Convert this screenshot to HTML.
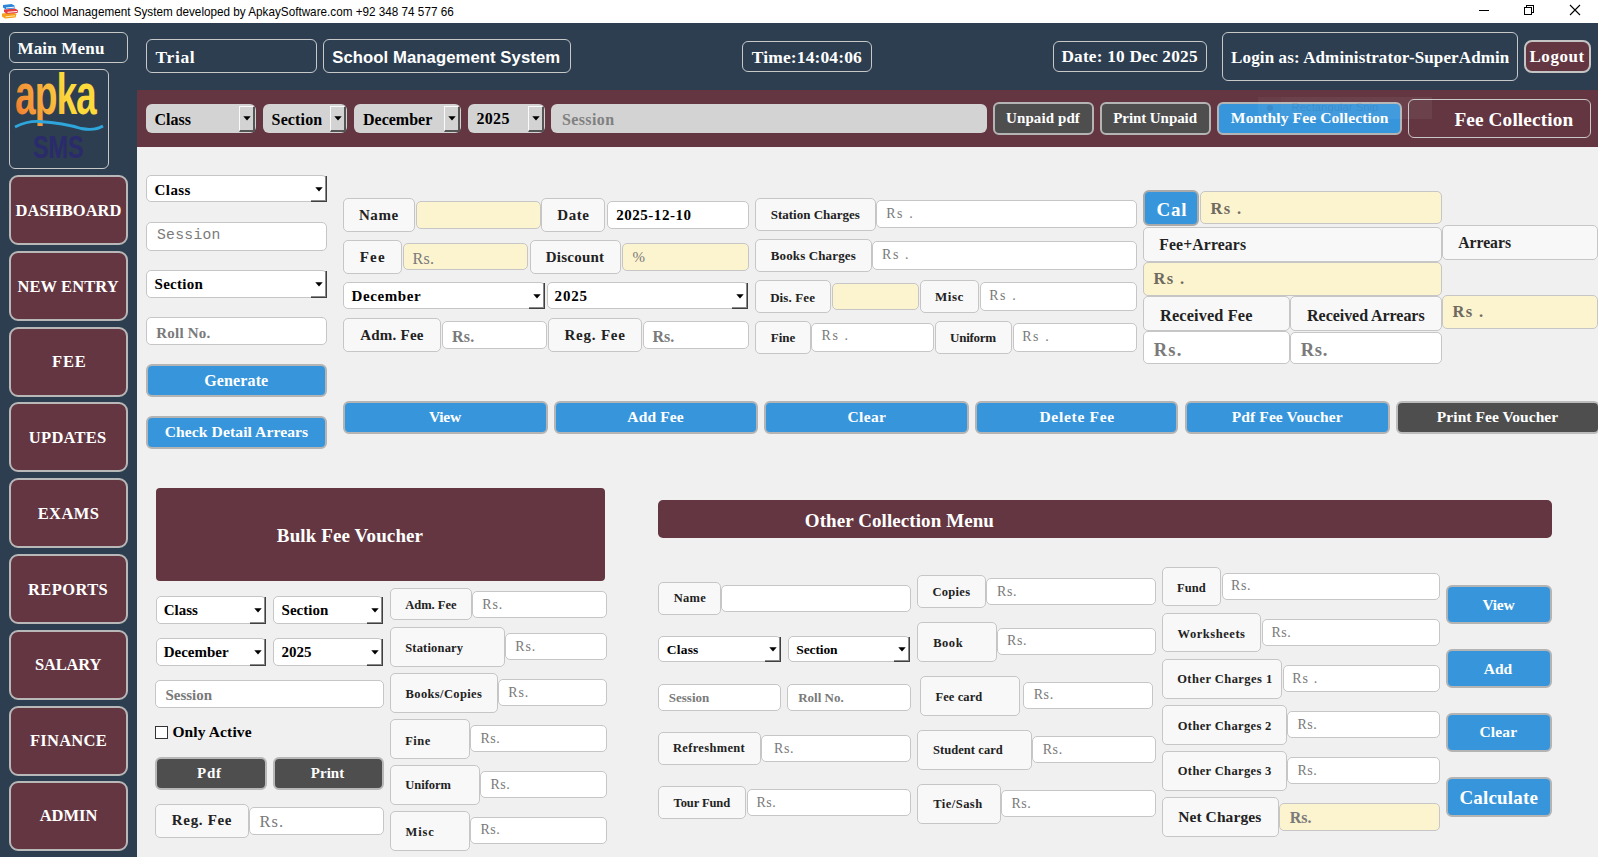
<!DOCTYPE html>
<html><head><meta charset="utf-8"><title>School Management System</title>
<style>
html,body{margin:0;padding:0;}
body{width:1598px;height:857px;overflow:hidden;position:relative;background:#f0f0f0;font-family:"Liberation Serif",serif;}
.b{position:absolute;box-sizing:border-box;}
.t{position:absolute;line-height:1;white-space:pre;}
</style></head><body>
<div class="b" style="left:0;top:0;width:1598px;height:23px;background:#fff"></div>
<div class="b" style="left:0;top:23px;width:1598px;height:834px;background:#2c3e50"></div>
<div class="b" style="left:137px;top:90px;width:1461px;height:57px;background:#633641"></div>
<div class="b" style="left:137px;top:147px;width:1461px;height:710px;background:#f0f0f0"></div>
<svg class="b" style="left:0px;top:0px" width="22" height="22" viewBox="0 0 22 22">
<path d="M2 13.5 L13 12.5 L16.5 14 L15.5 17.5 L5 18.5 L2 16.5 Z" fill="#f5a01c"/><path d="M5.5 16.8 L15 15.8" stroke="#fde7a8" stroke-width="1"/>
<path d="M4 9.5 L15 8.5 L18 10.2 L17.5 13 L6.5 13.8 L4 11.8 Z" fill="#e53a3f"/><path d="M7.5 12.3 L17 11.5" stroke="#fff" stroke-width="1"/>
<path d="M3 5 L11.5 4 L14.5 5.5 L14.5 8.5 L5.5 9.3 L3 7.5 Z" fill="#2a86d8"/><path d="M6 8 L14 7.2" stroke="#fff" stroke-width="1"/>
</svg>
<span class="t" style="left:23.00px;top:6.13px;font-size:12.6px;font-family:'Liberation Sans',sans-serif;font-weight:normal;color:#000;transform:scaleX(0.93);transform-origin:0 0;">School Management System developed by ApkaySoftware.com +92 348 74 577 66</span>
<div class="b" style="left:1479px;top:10px;width:10px;height:1px;background:#000"></div>
<div class="b" style="left:1526px;top:5px;width:8px;height:8px;border:1px solid #000;box-sizing:border-box"></div>
<div class="b" style="left:1524px;top:7px;width:8px;height:8px;border:1px solid #000;background:#fff;box-sizing:border-box"></div>
<svg class="b" style="left:1569px;top:4px" width="12" height="12" viewBox="0 0 12 12"><path d="M1 1 L11 11 M11 1 L1 11" stroke="#000" stroke-width="1.1"/></svg>
<div class="b" style="left:9px;top:32px;width:119px;height:31px;border:1.5px solid #c8c8c8;border-radius:6px;"></div>
<span class="t" style="left:17.40px;top:39.56px;font-size:17px;font-family:'Liberation Serif',serif;font-weight:bold;color:#fff;letter-spacing:0.200px;">Main Menu</span>
<div class="b" style="left:9px;top:69px;width:100px;height:100px;border:1.5px solid #c8c8c8;border-radius:6px;"></div>
<svg class="b" style="left:9px;top:69px" width="100" height="100" viewBox="0 0 100 100">
<defs><linearGradient id="og" gradientUnits="userSpaceOnUse" x1="6" y1="50" x2="90" y2="6"><stop offset="0" stop-color="#e9411f"/><stop offset="0.3" stop-color="#f28a35"/><stop offset="0.65" stop-color="#f7ad3b"/><stop offset="1" stop-color="#fcda3c"/></linearGradient></defs>
<text x="0" y="0" font-family="Liberation Sans" font-weight="bold" font-size="54" fill="url(#og)" transform="translate(6,45) scale(0.69,1.08)" letter-spacing="-1.5">apka</text>
<path d="M6 58 Q 18 52 30 52.5 Q 55 54 72 59.5 Q 86 62 94 57" stroke="#2ea6dc" stroke-width="2.8" fill="none"/>
<text x="0" y="0" font-family="Liberation Sans" font-weight="bold" font-size="32" fill="#2a2a6c" transform="translate(24,88.7) scale(0.73,1.0)">SMS</text>
</svg>
<div class="b" style="left:146px;top:39px;width:171px;height:34px;border:1.5px solid #c8c8c8;border-radius:6px;"></div>
<span class="t" style="left:155.60px;top:48.94px;font-size:17.5px;font-family:'Liberation Serif',serif;font-weight:bold;color:#fff;letter-spacing:0.600px;">Trial</span>
<div class="b" style="left:323px;top:39px;width:248px;height:34px;border:1.5px solid #c8c8c8;border-radius:6px;"></div>
<span class="t" style="left:332.20px;top:49.66px;font-size:16.7px;font-family:'Liberation Sans',sans-serif;font-weight:bold;color:#fff;letter-spacing:0.070px;">School Management System</span>
<div class="b" style="left:742px;top:41px;width:130px;height:31px;border:1.5px solid #c8c8c8;border-radius:6px;"></div>
<span class="t" style="left:751.70px;top:48.94px;font-size:17.5px;font-family:'Liberation Serif',serif;font-weight:bold;color:#fff;letter-spacing:0.134px;">Time:14:04:06</span>
<div class="b" style="left:1053px;top:41px;width:154px;height:31px;border:1.5px solid #c8c8c8;border-radius:6px;"></div>
<span class="t" style="left:1061.40px;top:47.51px;font-size:17.3px;font-family:'Liberation Serif',serif;font-weight:bold;color:#fff;letter-spacing:0.200px;">Date: 10 Dec 2025</span>
<div class="b" style="left:1222px;top:32px;width:296px;height:49px;border:1.5px solid #c8c8c8;border-radius:6px;"></div>
<span class="t" style="left:1231.10px;top:48.56px;font-size:17px;font-family:'Liberation Serif',serif;font-weight:bold;color:#fff;letter-spacing:0.120px;">Login as: Administrator-SuperAdmin</span>
<div class="b" style="left:1524px;top:40px;width:67px;height:33px;background:#633641;border:2.2px solid #c4c4c4;border-radius:8px;"></div>
<span class="t" style="left:1257.14px;width:600px;text-align:center;top:48.24px;font-size:17px;font-family:'Liberation Serif',serif;font-weight:bold;color:#fff;letter-spacing:0.576px;">Logout</span>
<div class="b" style="left:146px;top:104px;width:110px;height:29px;background:#d3d3d3;border-radius:6px;"></div>
<div class="b" style="left:239px;top:106px;width:16px;height:26px;background:#d3d3d3;border-left:1.5px solid #fafafa;border-top:1px solid #fafafa;border-right:2px solid #555;border-bottom:2px solid #555;"></div>
<svg class="b" style="left:242.5px;top:115.5px" width="8" height="5" viewBox="0 0 8 5"><path d="M0.3 0.3 H7.7 L4 4.6 Z" fill="#000"/></svg>
<span class="t" style="left:154.50px;top:112.20px;font-size:16px;font-family:'Liberation Serif',serif;font-weight:bold;color:#000;">Class</span>
<div class="b" style="left:263px;top:104px;width:84px;height:29px;background:#d3d3d3;border-radius:6px;"></div>
<div class="b" style="left:330px;top:106px;width:16px;height:26px;background:#d3d3d3;border-left:1.5px solid #fafafa;border-top:1px solid #fafafa;border-right:2px solid #555;border-bottom:2px solid #555;"></div>
<svg class="b" style="left:333.5px;top:115.5px" width="8" height="5" viewBox="0 0 8 5"><path d="M0.3 0.3 H7.7 L4 4.6 Z" fill="#000"/></svg>
<span class="t" style="left:271.60px;top:112.20px;font-size:16px;font-family:'Liberation Serif',serif;font-weight:bold;color:#000;letter-spacing:0.136px;">Section</span>
<div class="b" style="left:354px;top:104px;width:107px;height:29px;background:#d3d3d3;border-radius:6px;"></div>
<div class="b" style="left:444px;top:106px;width:16px;height:26px;background:#d3d3d3;border-left:1.5px solid #fafafa;border-top:1px solid #fafafa;border-right:2px solid #555;border-bottom:2px solid #555;"></div>
<svg class="b" style="left:447.5px;top:115.5px" width="8" height="5" viewBox="0 0 8 5"><path d="M0.3 0.3 H7.7 L4 4.6 Z" fill="#000"/></svg>
<span class="t" style="left:363.00px;top:112.20px;font-size:16px;font-family:'Liberation Serif',serif;font-weight:bold;color:#000;">December</span>
<div class="b" style="left:468px;top:104px;width:77px;height:29px;background:#d3d3d3;border-radius:6px;"></div>
<div class="b" style="left:528px;top:106px;width:16px;height:26px;background:#d3d3d3;border-left:1.5px solid #fafafa;border-top:1px solid #fafafa;border-right:2px solid #555;border-bottom:2px solid #555;"></div>
<svg class="b" style="left:531.5px;top:115.5px" width="8" height="5" viewBox="0 0 8 5"><path d="M0.3 0.3 H7.7 L4 4.6 Z" fill="#000"/></svg>
<span class="t" style="left:476.60px;top:110.60px;font-size:16px;font-family:'Liberation Serif',serif;font-weight:bold;color:#000;letter-spacing:0.263px;">2025</span>
<div class="b" style="left:551px;top:104px;width:436px;height:29px;background:#d3d3d3;border-radius:6px;"></div>
<span class="t" style="left:561.90px;top:111.90px;font-size:16px;font-family:'Liberation Serif',serif;font-weight:bold;color:#808080;letter-spacing:0.401px;">Session</span>
<div class="b" style="left:993px;top:102px;width:101px;height:33px;background:#4e4e4e;border:2.5px solid #b4b4b4;border-radius:6px;"></div>
<span class="t" style="left:743.00px;width:600px;text-align:center;top:110.64px;font-size:15px;font-family:'Liberation Serif',serif;font-weight:bold;color:#fff;letter-spacing:0.095px;">Unpaid pdf</span>
<div class="b" style="left:1100px;top:102px;width:111px;height:33px;background:#4e4e4e;border:2.5px solid #b4b4b4;border-radius:6px;"></div>
<span class="t" style="left:855.10px;width:600px;text-align:center;top:110.64px;font-size:15px;font-family:'Liberation Serif',serif;font-weight:bold;color:#fff;letter-spacing:-0.071px;">Print Unpaid</span>
<div class="b" style="left:1217px;top:102px;width:185px;height:33px;background:#3796db;border:2.5px solid #b4b4b4;border-radius:6px;"></div>
<span class="t" style="left:1009.70px;width:600px;text-align:center;top:110.14px;font-size:15.6px;font-family:'Liberation Serif',serif;font-weight:bold;color:#fff;letter-spacing:0.080px;">Monthly Fee Collection</span>
<div class="b" style="left:1408px;top:99px;width:183px;height:39px;border:1.5px solid #c8c8c8;border-radius:6px;"></div>
<span class="t" style="left:1454.40px;top:109.64px;font-size:19.3px;font-family:'Liberation Serif',serif;font-weight:bold;color:#fff;letter-spacing:0.118px;">Fee Collection</span>
<div class="b" style="left:1258px;top:97px;width:174px;height:22px;background:rgba(255,255,255,0.045);"></div>
<div class="b" style="left:1281px;top:97px;width:151px;height:22px;background:rgba(255,255,255,0.02);"></div>
<div class="b" style="left:1267px;top:105px;width:6px;height:6px;border-radius:3px;background:rgba(20,30,70,0.12)"></div>
<span class="t" style="left:1291.60px;top:101.83px;font-size:11.3px;font-family:'Liberation Sans',sans-serif;font-weight:normal;color:rgba(20,30,80,0.13);">Rectangular Snip</span>
<div class="b" style="left:9px;top:175px;width:119px;height:70px;background:#633641;border:2.5px solid #b8b8b8;border-radius:9px;"></div>
<span class="t" style="left:-231.42px;width:600px;text-align:center;top:203.04px;font-size:16.5px;font-family:'Liberation Serif',serif;font-weight:bold;color:#fff;letter-spacing:0.060px;">DASHBOARD</span>
<div class="b" style="left:9px;top:251px;width:119px;height:70px;background:#633641;border:2.5px solid #b8b8b8;border-radius:9px;"></div>
<span class="t" style="left:-231.90px;width:600px;text-align:center;top:278.68px;font-size:16.5px;font-family:'Liberation Serif',serif;font-weight:bold;color:#fff;letter-spacing:0.100px;">NEW ENTRY</span>
<div class="b" style="left:9px;top:327px;width:119px;height:70px;background:#633641;border:2.5px solid #b8b8b8;border-radius:9px;"></div>
<span class="t" style="left:-230.70px;width:600px;text-align:center;top:354.48px;font-size:16.5px;font-family:'Liberation Serif',serif;font-weight:bold;color:#fff;letter-spacing:0.800px;">FEE</span>
<div class="b" style="left:9px;top:402px;width:119px;height:70px;background:#633641;border:2.5px solid #b8b8b8;border-radius:9px;"></div>
<span class="t" style="left:-232.30px;width:600px;text-align:center;top:430.28px;font-size:16.5px;font-family:'Liberation Serif',serif;font-weight:bold;color:#fff;letter-spacing:0.267px;">UPDATES</span>
<div class="b" style="left:9px;top:478px;width:119px;height:70px;background:#633641;border:2.5px solid #b8b8b8;border-radius:9px;"></div>
<span class="t" style="left:-231.50px;width:600px;text-align:center;top:506.08px;font-size:16.5px;font-family:'Liberation Serif',serif;font-weight:bold;color:#fff;letter-spacing:0.400px;">EXAMS</span>
<div class="b" style="left:9px;top:554px;width:119px;height:70px;background:#633641;border:2.5px solid #b8b8b8;border-radius:9px;"></div>
<span class="t" style="left:-231.90px;width:600px;text-align:center;top:581.88px;font-size:16.5px;font-family:'Liberation Serif',serif;font-weight:bold;color:#fff;letter-spacing:0.398px;">REPORTS</span>
<div class="b" style="left:9px;top:630px;width:119px;height:70px;background:#633641;border:2.5px solid #b8b8b8;border-radius:9px;"></div>
<span class="t" style="left:-231.90px;width:600px;text-align:center;top:656.88px;font-size:16.5px;font-family:'Liberation Serif',serif;font-weight:bold;color:#fff;letter-spacing:-0.160px;">SALARY</span>
<div class="b" style="left:9px;top:706px;width:119px;height:70px;background:#633641;border:2.5px solid #b8b8b8;border-radius:9px;"></div>
<span class="t" style="left:-231.50px;width:600px;text-align:center;top:732.68px;font-size:16.5px;font-family:'Liberation Serif',serif;font-weight:bold;color:#fff;letter-spacing:0.267px;">FINANCE</span>
<div class="b" style="left:9px;top:781px;width:119px;height:70px;background:#633641;border:2.5px solid #b8b8b8;border-radius:9px;"></div>
<span class="t" style="left:-231.50px;width:600px;text-align:center;top:808.48px;font-size:16.5px;font-family:'Liberation Serif',serif;font-weight:bold;color:#fff;">ADMIN</span>
<div class="b" style="left:146px;top:175px;width:181px;height:27px;background:#fff;border:1px solid #c6c6c6;border-radius:5px;"></div>
<div class="b" style="left:325px;top:176px;width:1px;height:25px;background:#8a8a8a;"></div>
<div class="b" style="left:311px;top:200px;width:15px;height:1px;background:#8a8a8a;"></div>
<div class="b" style="left:326px;top:176px;width:1px;height:26px;background:#404040;"></div>
<div class="b" style="left:311px;top:201px;width:16px;height:1px;background:#404040;"></div>
<svg class="b" style="left:314.5px;top:186.5px" width="8" height="5" viewBox="0 0 8 5"><path d="M0.3 0.3 H7.7 L4 4.6 Z" fill="#000"/></svg>
<span class="t" style="left:154.60px;top:182.64px;font-size:15px;font-family:'Liberation Serif',serif;font-weight:bold;color:#000;letter-spacing:0.400px;">Class</span>
<div class="b" style="left:146px;top:222px;width:181px;height:29px;background:#fff;border:1px solid #c6c6c6;border-radius:5px;"></div>
<span class="t" style="left:157.02px;top:228.49px;font-size:14.7px;font-family:'Liberation Mono',monospace;font-weight:normal;color:#7a7a7a;letter-spacing:0.279px;">Session</span>
<div class="b" style="left:146px;top:270px;width:181px;height:28px;background:#fff;border:1px solid #c6c6c6;border-radius:5px;"></div>
<div class="b" style="left:325px;top:271px;width:1px;height:26px;background:#8a8a8a;"></div>
<div class="b" style="left:311px;top:296px;width:15px;height:1px;background:#8a8a8a;"></div>
<div class="b" style="left:326px;top:271px;width:1px;height:27px;background:#404040;"></div>
<div class="b" style="left:311px;top:297px;width:16px;height:1px;background:#404040;"></div>
<svg class="b" style="left:314.5px;top:282.0px" width="8" height="5" viewBox="0 0 8 5"><path d="M0.3 0.3 H7.7 L4 4.6 Z" fill="#000"/></svg>
<span class="t" style="left:154.60px;top:277.24px;font-size:15px;font-family:'Liberation Serif',serif;font-weight:bold;color:#000;letter-spacing:0.263px;">Section</span>
<div class="b" style="left:146px;top:317px;width:181px;height:28px;background:#fff;border:1px solid #c6c6c6;border-radius:5px;"></div>
<span class="t" style="left:156.20px;top:325.64px;font-size:15px;font-family:'Liberation Serif',serif;font-weight:bold;color:#7a7a7a;letter-spacing:0.232px;">Roll No.</span>
<div class="b" style="left:146px;top:364px;width:181px;height:33px;background:#3796db;border:2px solid #b4b4b4;border-radius:6px;"></div>
<span class="t" style="left:-63.70px;width:600px;text-align:center;top:372.60px;font-size:16px;font-family:'Liberation Serif',serif;font-weight:bold;color:#fff;letter-spacing:0.118px;">Generate</span>
<div class="b" style="left:146px;top:416px;width:181px;height:33px;background:#3796db;border:2px solid #b4b4b4;border-radius:6px;"></div>
<span class="t" style="left:-63.50px;width:600px;text-align:center;top:424.44px;font-size:15.6px;font-family:'Liberation Serif',serif;font-weight:bold;color:#fff;letter-spacing:0.088px;">Check Detail Arrears</span>
<div class="b" style="left:343px;top:198px;width:72px;height:34px;background:#f8f8f8;border:1px solid #c6c6c6;border-radius:5px;"></div>
<span class="t" style="left:78.80px;width:600px;text-align:center;top:208.24px;font-size:15px;font-family:'Liberation Serif',serif;font-weight:bold;color:#222;letter-spacing:0.530px;">Name</span>
<div class="b" style="left:416px;top:201px;width:125px;height:28px;background:#fcf3cf;border:1px solid #c6c6c6;border-radius:5px;"></div>
<div class="b" style="left:541px;top:198px;width:64px;height:34px;background:#f8f8f8;border:1px solid #c6c6c6;border-radius:5px;"></div>
<span class="t" style="left:273.40px;width:600px;text-align:center;top:208.24px;font-size:15px;font-family:'Liberation Serif',serif;font-weight:bold;color:#222;letter-spacing:0.530px;">Date</span>
<div class="b" style="left:607px;top:201px;width:142px;height:28px;background:#fff;border:1px solid #c6c6c6;border-radius:5px;"></div>
<span class="t" style="left:616.20px;top:208.24px;font-size:15px;font-family:'Liberation Serif',serif;font-weight:bold;color:#000;letter-spacing:0.533px;">2025-12-10</span>
<div class="b" style="left:343px;top:240px;width:59px;height:34px;background:#f8f8f8;border:1px solid #c6c6c6;border-radius:5px;"></div>
<span class="t" style="left:72.80px;width:600px;text-align:center;top:250.24px;font-size:15px;font-family:'Liberation Serif',serif;font-weight:bold;color:#222;letter-spacing:1.200px;">Fee</span>
<div class="b" style="left:403px;top:243px;width:125px;height:27px;background:#fcf3cf;border:1px solid #c6c6c6;border-radius:5px;"></div>
<span class="t" style="left:412.52px;top:250.90px;font-size:16px;font-family:'Liberation Serif',serif;font-weight:normal;color:#7a7a7a;letter-spacing:0.320px;">Rs.</span>
<div class="b" style="left:530px;top:240px;width:91px;height:34px;background:#f8f8f8;border:1px solid #c6c6c6;border-radius:5px;"></div>
<span class="t" style="left:275.00px;width:600px;text-align:center;top:249.74px;font-size:15px;font-family:'Liberation Serif',serif;font-weight:bold;color:#222;letter-spacing:0.232px;">Discount</span>
<div class="b" style="left:622px;top:243px;width:127px;height:28px;background:#fcf3cf;border:1px solid #c6c6c6;border-radius:5px;"></div>
<span class="t" style="left:632.50px;top:250.14px;font-size:15px;font-family:'Liberation Serif',serif;font-weight:normal;color:#7a7a7a;">%</span>
<div class="b" style="left:343px;top:282px;width:202px;height:27px;background:#fff;border:1px solid #c6c6c6;border-radius:5px;"></div>
<div class="b" style="left:543px;top:283px;width:1px;height:25px;background:#8a8a8a;"></div>
<div class="b" style="left:529px;top:307px;width:15px;height:1px;background:#8a8a8a;"></div>
<div class="b" style="left:544px;top:283px;width:1px;height:26px;background:#404040;"></div>
<div class="b" style="left:529px;top:308px;width:16px;height:1px;background:#404040;"></div>
<svg class="b" style="left:532.5px;top:293.5px" width="8" height="5" viewBox="0 0 8 5"><path d="M0.3 0.3 H7.7 L4 4.6 Z" fill="#000"/></svg>
<span class="t" style="left:351.60px;top:289.24px;font-size:15px;font-family:'Liberation Serif',serif;font-weight:bold;color:#000;letter-spacing:0.575px;">December</span>
<div class="b" style="left:547px;top:282px;width:201px;height:27px;background:#fff;border:1px solid #c6c6c6;border-radius:5px;"></div>
<div class="b" style="left:746px;top:283px;width:1px;height:25px;background:#8a8a8a;"></div>
<div class="b" style="left:732px;top:307px;width:15px;height:1px;background:#8a8a8a;"></div>
<div class="b" style="left:747px;top:283px;width:1px;height:26px;background:#404040;"></div>
<div class="b" style="left:732px;top:308px;width:16px;height:1px;background:#404040;"></div>
<svg class="b" style="left:735.5px;top:293.5px" width="8" height="5" viewBox="0 0 8 5"><path d="M0.3 0.3 H7.7 L4 4.6 Z" fill="#000"/></svg>
<span class="t" style="left:554.60px;top:289.24px;font-size:15px;font-family:'Liberation Serif',serif;font-weight:bold;color:#000;letter-spacing:0.802px;">2025</span>
<div class="b" style="left:343px;top:318px;width:98px;height:34px;background:#f8f8f8;border:1px solid #c6c6c6;border-radius:5px;"></div>
<span class="t" style="left:92.00px;width:600px;text-align:center;top:327.94px;font-size:15px;font-family:'Liberation Serif',serif;font-weight:bold;color:#222;letter-spacing:0.232px;">Adm. Fee</span>
<div class="b" style="left:442px;top:321px;width:105px;height:28px;background:#fff;border:1px solid #c6c6c6;border-radius:5px;"></div>
<span class="t" style="left:452.00px;top:329.44px;font-size:16px;font-family:'Liberation Serif',serif;font-weight:bold;color:#7a7a7a;letter-spacing:0.280px;">Rs.</span>
<div class="b" style="left:548px;top:318px;width:94px;height:34px;background:#f8f8f8;border:1px solid #c6c6c6;border-radius:5px;"></div>
<span class="t" style="left:295.10px;width:600px;text-align:center;top:327.94px;font-size:15px;font-family:'Liberation Serif',serif;font-weight:bold;color:#222;letter-spacing:0.804px;">Reg. Fee</span>
<div class="b" style="left:643px;top:321px;width:106px;height:28px;background:#fff;border:1px solid #c6c6c6;border-radius:5px;"></div>
<span class="t" style="left:652.38px;top:329.44px;font-size:16px;font-family:'Liberation Serif',serif;font-weight:bold;color:#7a7a7a;letter-spacing:0.040px;">Rs.</span>
<div class="b" style="left:755px;top:198px;width:121px;height:33px;background:#f8f8f8;border:1px solid #c6c6c6;border-radius:5px;"></div>
<span class="t" style="left:515.30px;width:600px;text-align:center;top:208.11px;font-size:13px;font-family:'Liberation Serif',serif;font-weight:bold;color:#222;letter-spacing:0.006px;">Station Charges</span>
<div class="b" style="left:876px;top:200px;width:261px;height:28px;background:#fff;border:1px solid #c6c6c6;border-radius:5px;"></div>
<span class="t" style="left:886.20px;top:206.88px;font-size:14px;font-family:'Liberation Serif',serif;font-weight:normal;color:#7a7a7a;letter-spacing:1.598px;">Rs .</span>
<div class="b" style="left:755px;top:239px;width:117px;height:33px;background:#f8f8f8;border:1px solid #c6c6c6;border-radius:5px;"></div>
<span class="t" style="left:513.30px;width:600px;text-align:center;top:249.01px;font-size:13px;font-family:'Liberation Serif',serif;font-weight:bold;color:#222;letter-spacing:0.134px;">Books Charges</span>
<div class="b" style="left:872px;top:241px;width:265px;height:29px;background:#fff;border:1px solid #c6c6c6;border-radius:5px;"></div>
<span class="t" style="left:882.00px;top:247.58px;font-size:14px;font-family:'Liberation Serif',serif;font-weight:normal;color:#7a7a7a;letter-spacing:1.598px;">Rs .</span>
<div class="b" style="left:755px;top:280px;width:76px;height:33px;background:#f8f8f8;border:1px solid #c6c6c6;border-radius:5px;"></div>
<span class="t" style="left:492.60px;width:600px;text-align:center;top:290.51px;font-size:13px;font-family:'Liberation Serif',serif;font-weight:bold;color:#222;letter-spacing:0.110px;">Dis. Fee</span>
<div class="b" style="left:832px;top:283px;width:87px;height:27px;background:#fcf3cf;border:1px solid #c6c6c6;border-radius:5px;"></div>
<div class="b" style="left:920px;top:280px;width:59px;height:33px;background:#f8f8f8;border:1px solid #c6c6c6;border-radius:5px;"></div>
<span class="t" style="left:649.40px;width:600px;text-align:center;top:289.91px;font-size:13px;font-family:'Liberation Serif',serif;font-weight:bold;color:#222;letter-spacing:0.537px;">Misc</span>
<div class="b" style="left:980px;top:282px;width:157px;height:29px;background:#fff;border:1px solid #c6c6c6;border-radius:5px;"></div>
<span class="t" style="left:989.20px;top:288.88px;font-size:14px;font-family:'Liberation Serif',serif;font-weight:normal;color:#7a7a7a;letter-spacing:1.598px;">Rs .</span>
<div class="b" style="left:755px;top:321px;width:56px;height:33px;background:#f8f8f8;border:1px solid #c6c6c6;border-radius:5px;"></div>
<span class="t" style="left:483.00px;width:600px;text-align:center;top:331.41px;font-size:13px;font-family:'Liberation Serif',serif;font-weight:bold;color:#222;letter-spacing:0.004px;">Fine</span>
<div class="b" style="left:811px;top:323px;width:123px;height:29px;background:#fff;border:1px solid #c6c6c6;border-radius:5px;"></div>
<span class="t" style="left:821.50px;top:329.38px;font-size:14px;font-family:'Liberation Serif',serif;font-weight:normal;color:#7a7a7a;letter-spacing:1.599px;">Rs .</span>
<div class="b" style="left:935px;top:321px;width:77px;height:33px;background:#f8f8f8;border:1px solid #c6c6c6;border-radius:5px;"></div>
<span class="t" style="left:673.00px;width:600px;text-align:center;top:331.01px;font-size:13px;font-family:'Liberation Serif',serif;font-weight:bold;color:#222;letter-spacing:-0.270px;">Uniform</span>
<div class="b" style="left:1013px;top:323px;width:124px;height:29px;background:#fff;border:1px solid #c6c6c6;border-radius:5px;"></div>
<span class="t" style="left:1022.20px;top:329.68px;font-size:14px;font-family:'Liberation Serif',serif;font-weight:normal;color:#7a7a7a;letter-spacing:1.598px;">Rs .</span>
<div class="b" style="left:1143px;top:190px;width:56px;height:36px;background:#3796db;border:2px solid #aaa;border-radius:6px;"></div>
<span class="t" style="left:872.00px;width:600px;text-align:center;top:199.89px;font-size:19px;font-family:'Liberation Serif',serif;font-weight:bold;color:#fff;letter-spacing:0.800px;">Cal</span>
<div class="b" style="left:1200px;top:191px;width:242px;height:33px;background:#fcf3cf;border:1px solid #c6c6c6;border-radius:5px;"></div>
<span class="t" style="left:1210.60px;top:200.58px;font-size:16.5px;font-family:'Liberation Serif',serif;font-weight:bold;color:#6e6a5e;letter-spacing:1.335px;">Rs .</span>
<div class="b" style="left:1143px;top:227px;width:299px;height:35px;background:#f8f8f8;border:1px solid #c6c6c6;border-radius:5px;"></div>
<span class="t" style="left:1159.20px;top:237.25px;font-size:15.7px;font-family:'Liberation Serif',serif;font-weight:bold;color:#222;letter-spacing:0.160px;">Fee+Arrears</span>
<div class="b" style="left:1442px;top:225px;width:156px;height:35px;background:#f8f8f8;border:1px solid #c6c6c6;border-radius:5px;"></div>
<span class="t" style="left:1458.20px;top:235.15px;font-size:15.7px;font-family:'Liberation Serif',serif;font-weight:bold;color:#222;letter-spacing:-0.002px;">Arrears</span>
<div class="b" style="left:1143px;top:262px;width:299px;height:34px;background:#fcf3cf;border:1px solid #c6c6c6;border-radius:5px;"></div>
<span class="t" style="left:1153.60px;top:270.98px;font-size:16.5px;font-family:'Liberation Serif',serif;font-weight:bold;color:#6e6a5e;letter-spacing:1.335px;">Rs .</span>
<div class="b" style="left:1143px;top:296px;width:147px;height:35px;background:#f8f8f8;border:1px solid #c6c6c6;border-radius:5px;"></div>
<span class="t" style="left:1160.00px;top:307.55px;font-size:16.3px;font-family:'Liberation Serif',serif;font-weight:bold;color:#222;letter-spacing:0.144px;">Received Fee</span>
<div class="b" style="left:1290px;top:296px;width:152px;height:35px;background:#f8f8f8;border:1px solid #c6c6c6;border-radius:5px;"></div>
<span class="t" style="left:1307.10px;top:307.80px;font-size:16px;font-family:'Liberation Serif',serif;font-weight:bold;color:#222;letter-spacing:-0.053px;">Received Arrears</span>
<div class="b" style="left:1442px;top:295px;width:156px;height:34px;background:#fcf3cf;border:1px solid #c6c6c6;border-radius:5px;"></div>
<span class="t" style="left:1452.60px;top:304.28px;font-size:16.5px;font-family:'Liberation Serif',serif;font-weight:bold;color:#6e6a5e;letter-spacing:1.333px;">Rs .</span>
<div class="b" style="left:1143px;top:331px;width:147px;height:33px;background:#fff;border:1px solid #c6c6c6;border-radius:5px;"></div>
<span class="t" style="left:1153.64px;top:341.27px;font-size:18.5px;font-family:'Liberation Serif',serif;font-weight:bold;color:#7a7a7a;letter-spacing:1.240px;">Rs.</span>
<div class="b" style="left:1290px;top:332px;width:152px;height:32px;background:#fff;border:1px solid #c6c6c6;border-radius:5px;"></div>
<span class="t" style="left:1300.74px;top:341.27px;font-size:18.5px;font-family:'Liberation Serif',serif;font-weight:bold;color:#7a7a7a;letter-spacing:0.720px;">Rs.</span>
<div class="b" style="left:343px;top:401px;width:205px;height:33px;background:#3796db;border:2px solid #b4b4b4;border-radius:6px;"></div>
<span class="t" style="left:144.95px;width:600px;text-align:center;top:409.02px;font-size:15.5px;font-family:'Liberation Serif',serif;font-weight:bold;color:#fff;letter-spacing:-0.268px;">View</span>
<div class="b" style="left:554px;top:401px;width:204px;height:33px;background:#3796db;border:2px solid #b4b4b4;border-radius:6px;"></div>
<span class="t" style="left:355.55px;width:600px;text-align:center;top:409.02px;font-size:15.5px;font-family:'Liberation Serif',serif;font-weight:bold;color:#fff;letter-spacing:0.132px;">Add Fee</span>
<div class="b" style="left:764px;top:401px;width:205px;height:33px;background:#3796db;border:2px solid #b4b4b4;border-radius:6px;"></div>
<span class="t" style="left:566.90px;width:600px;text-align:center;top:409.02px;font-size:15.5px;font-family:'Liberation Serif',serif;font-weight:bold;color:#fff;letter-spacing:0.400px;">Clear</span>
<div class="b" style="left:975px;top:401px;width:203px;height:33px;background:#3796db;border:2px solid #b4b4b4;border-radius:6px;"></div>
<span class="t" style="left:777.20px;width:600px;text-align:center;top:409.02px;font-size:15.5px;font-family:'Liberation Serif',serif;font-weight:bold;color:#fff;letter-spacing:0.715px;">Delete Fee</span>
<div class="b" style="left:1185px;top:401px;width:205px;height:33px;background:#3796db;border:2px solid #b4b4b4;border-radius:6px;"></div>
<span class="t" style="left:987.25px;width:600px;text-align:center;top:409.02px;font-size:15.5px;font-family:'Liberation Serif',serif;font-weight:bold;color:#fff;letter-spacing:0.116px;">Pdf Fee Voucher</span>
<div class="b" style="left:1396px;top:401px;width:204px;height:33px;background:#4e4e4e;border:2px solid #bcbcbc;border-radius:6px;"></div>
<span class="t" style="left:1197.55px;width:600px;text-align:center;top:409.02px;font-size:15.5px;font-family:'Liberation Serif',serif;font-weight:bold;color:#fff;letter-spacing:0.050px;">Print Fee Voucher</span>
<div class="b" style="left:156px;top:488px;width:449px;height:93px;background:#633641;border-radius:4px;"></div>
<span class="t" style="left:50.00px;width:600px;text-align:center;top:525.89px;font-size:19px;font-family:'Liberation Serif',serif;font-weight:bold;color:#fff;letter-spacing:0.103px;">Bulk Fee Voucher</span>
<div class="b" style="left:156px;top:596px;width:110px;height:28px;background:#fff;border:1px solid #c6c6c6;border-radius:5px;"></div>
<div class="b" style="left:264px;top:597px;width:1px;height:26px;background:#8a8a8a;"></div>
<div class="b" style="left:250px;top:622px;width:15px;height:1px;background:#8a8a8a;"></div>
<div class="b" style="left:265px;top:597px;width:1px;height:27px;background:#404040;"></div>
<div class="b" style="left:250px;top:623px;width:16px;height:1px;background:#404040;"></div>
<svg class="b" style="left:253.5px;top:608.0px" width="8" height="5" viewBox="0 0 8 5"><path d="M0.3 0.3 H7.7 L4 4.6 Z" fill="#000"/></svg>
<span class="t" style="left:163.70px;top:602.84px;font-size:15px;font-family:'Liberation Serif',serif;font-weight:bold;color:#000;">Class</span>
<div class="b" style="left:273px;top:596px;width:110px;height:28px;background:#fff;border:1px solid #c6c6c6;border-radius:5px;"></div>
<div class="b" style="left:381px;top:597px;width:1px;height:26px;background:#8a8a8a;"></div>
<div class="b" style="left:367px;top:622px;width:15px;height:1px;background:#8a8a8a;"></div>
<div class="b" style="left:382px;top:597px;width:1px;height:27px;background:#404040;"></div>
<div class="b" style="left:367px;top:623px;width:16px;height:1px;background:#404040;"></div>
<svg class="b" style="left:370.5px;top:608.0px" width="8" height="5" viewBox="0 0 8 5"><path d="M0.3 0.3 H7.7 L4 4.6 Z" fill="#000"/></svg>
<span class="t" style="left:281.60px;top:602.84px;font-size:15px;font-family:'Liberation Serif',serif;font-weight:bold;color:#000;">Section</span>
<div class="b" style="left:156px;top:638px;width:110px;height:28px;background:#fff;border:1px solid #c6c6c6;border-radius:5px;"></div>
<div class="b" style="left:264px;top:639px;width:1px;height:26px;background:#8a8a8a;"></div>
<div class="b" style="left:250px;top:664px;width:15px;height:1px;background:#8a8a8a;"></div>
<div class="b" style="left:265px;top:639px;width:1px;height:27px;background:#404040;"></div>
<div class="b" style="left:250px;top:665px;width:16px;height:1px;background:#404040;"></div>
<svg class="b" style="left:253.5px;top:650.0px" width="8" height="5" viewBox="0 0 8 5"><path d="M0.3 0.3 H7.7 L4 4.6 Z" fill="#000"/></svg>
<span class="t" style="left:163.70px;top:644.94px;font-size:15px;font-family:'Liberation Serif',serif;font-weight:bold;color:#000;">December</span>
<div class="b" style="left:273px;top:638px;width:110px;height:28px;background:#fff;border:1px solid #c6c6c6;border-radius:5px;"></div>
<div class="b" style="left:381px;top:639px;width:1px;height:26px;background:#8a8a8a;"></div>
<div class="b" style="left:367px;top:664px;width:15px;height:1px;background:#8a8a8a;"></div>
<div class="b" style="left:382px;top:639px;width:1px;height:27px;background:#404040;"></div>
<div class="b" style="left:367px;top:665px;width:16px;height:1px;background:#404040;"></div>
<svg class="b" style="left:370.5px;top:650.0px" width="8" height="5" viewBox="0 0 8 5"><path d="M0.3 0.3 H7.7 L4 4.6 Z" fill="#000"/></svg>
<span class="t" style="left:281.60px;top:644.94px;font-size:15px;font-family:'Liberation Serif',serif;font-weight:bold;color:#000;">2025</span>
<div class="b" style="left:155px;top:680px;width:229px;height:28px;background:#fff;border:1px solid #c6c6c6;border-radius:5px;"></div>
<span class="t" style="left:165.40px;top:688.24px;font-size:15px;font-family:'Liberation Serif',serif;font-weight:bold;color:#7a7a7a;">Session</span>
<div class="b" style="left:155px;top:726px;width:13px;height:13px;background:#fff;border:1px solid #333;"></div>
<span class="t" style="left:172.40px;top:723.90px;font-size:15.5px;font-family:'Liberation Serif',serif;font-weight:bold;color:#000;letter-spacing:0.128px;">Only Active</span>
<div class="b" style="left:155px;top:757px;width:112px;height:33px;background:#4e4e4e;border:2px solid #b8b8b8;border-radius:6px;"></div>
<span class="t" style="left:-90.60px;width:600px;text-align:center;top:766.04px;font-size:15px;font-family:'Liberation Serif',serif;font-weight:bold;color:#fff;letter-spacing:0.800px;">Pdf</span>
<div class="b" style="left:273px;top:757px;width:111px;height:33px;background:#4e4e4e;border:2px solid #b8b8b8;border-radius:6px;"></div>
<span class="t" style="left:27.50px;width:600px;text-align:center;top:766.04px;font-size:15px;font-family:'Liberation Serif',serif;font-weight:bold;color:#fff;">Print</span>
<div class="b" style="left:155px;top:804px;width:94px;height:34px;background:#f8f8f8;border:1px solid #c6c6c6;border-radius:5px;"></div>
<span class="t" style="left:-98.00px;width:600px;text-align:center;top:813.44px;font-size:15px;font-family:'Liberation Serif',serif;font-weight:bold;color:#222;letter-spacing:0.683px;">Reg. Fee</span>
<div class="b" style="left:249px;top:807px;width:135px;height:28px;background:#fff;border:1px solid #c6c6c6;border-radius:5px;"></div>
<span class="t" style="left:259.44px;top:813.74px;font-size:16.5px;font-family:'Liberation Serif',serif;font-weight:normal;color:#7a7a7a;letter-spacing:1.040px;">Rs.</span>
<div class="b" style="left:390px;top:588px;width:82px;height:32px;background:#f8f8f8;border:1px solid #c6c6c6;border-radius:5px;"></div>
<span class="t" style="left:405.20px;top:599.33px;font-size:12.5px;font-family:'Liberation Serif',serif;font-weight:bold;color:#222;letter-spacing:0.004px;">Adm. Fee</span>
<div class="b" style="left:472px;top:591px;width:135px;height:27px;background:#fff;border:1px solid #c6c6c6;border-radius:5px;"></div>
<span class="t" style="left:482.28px;top:597.93px;font-size:14px;font-family:'Liberation Serif',serif;font-weight:normal;color:#7a7a7a;letter-spacing:0.880px;">Rs.</span>
<div class="b" style="left:390px;top:627px;width:115px;height:40px;background:#f8f8f8;border:1px solid #c6c6c6;border-radius:5px;"></div>
<span class="t" style="left:405.20px;top:641.93px;font-size:12.5px;font-family:'Liberation Serif',serif;font-weight:bold;color:#222;letter-spacing:0.182px;">Stationary</span>
<div class="b" style="left:505px;top:633px;width:102px;height:27px;background:#fff;border:1px solid #c6c6c6;border-radius:5px;"></div>
<span class="t" style="left:515.28px;top:639.84px;font-size:14px;font-family:'Liberation Serif',serif;font-weight:normal;color:#7a7a7a;letter-spacing:0.880px;">Rs.</span>
<div class="b" style="left:390px;top:673px;width:108px;height:40px;background:#f8f8f8;border:1px solid #c6c6c6;border-radius:5px;"></div>
<span class="t" style="left:405.60px;top:687.63px;font-size:12.5px;font-family:'Liberation Serif',serif;font-weight:bold;color:#222;letter-spacing:0.364px;">Books/Copies</span>
<div class="b" style="left:498px;top:679px;width:109px;height:27px;background:#fff;border:1px solid #c6c6c6;border-radius:5px;"></div>
<span class="t" style="left:508.28px;top:685.55px;font-size:14px;font-family:'Liberation Serif',serif;font-weight:normal;color:#7a7a7a;letter-spacing:0.880px;">Rs.</span>
<div class="b" style="left:390px;top:719px;width:80px;height:40px;background:#f8f8f8;border:1px solid #c6c6c6;border-radius:5px;"></div>
<span class="t" style="left:405.20px;top:734.63px;font-size:12.5px;font-family:'Liberation Serif',serif;font-weight:bold;color:#222;letter-spacing:0.537px;">Fine</span>
<div class="b" style="left:470px;top:725px;width:137px;height:27px;background:#fff;border:1px solid #c6c6c6;border-radius:5px;"></div>
<span class="t" style="left:480.40px;top:731.84px;font-size:14px;font-family:'Liberation Serif',serif;font-weight:normal;color:#7a7a7a;letter-spacing:0.480px;">Rs.</span>
<div class="b" style="left:390px;top:765px;width:90px;height:40px;background:#f8f8f8;border:1px solid #c6c6c6;border-radius:5px;"></div>
<span class="t" style="left:405.20px;top:779.33px;font-size:12.5px;font-family:'Liberation Serif',serif;font-weight:bold;color:#222;letter-spacing:0.002px;">Uniform</span>
<div class="b" style="left:480px;top:771px;width:127px;height:27px;background:#fff;border:1px solid #c6c6c6;border-radius:5px;"></div>
<span class="t" style="left:490.40px;top:777.84px;font-size:14px;font-family:'Liberation Serif',serif;font-weight:normal;color:#7a7a7a;letter-spacing:0.480px;">Rs.</span>
<div class="b" style="left:390px;top:811px;width:80px;height:40px;background:#f8f8f8;border:1px solid #c6c6c6;border-radius:5px;"></div>
<span class="t" style="left:405.60px;top:826.43px;font-size:12.5px;font-family:'Liberation Serif',serif;font-weight:bold;color:#222;letter-spacing:0.804px;">Misc</span>
<div class="b" style="left:470px;top:817px;width:137px;height:27px;background:#fff;border:1px solid #c6c6c6;border-radius:5px;"></div>
<span class="t" style="left:480.40px;top:823.41px;font-size:14px;font-family:'Liberation Serif',serif;font-weight:normal;color:#7a7a7a;letter-spacing:0.480px;">Rs.</span>
<div class="b" style="left:658px;top:500px;width:894px;height:38px;background:#633641;border-radius:5px;"></div>
<span class="t" style="left:804.80px;top:510.79px;font-size:19px;font-family:'Liberation Serif',serif;font-weight:bold;color:#fff;letter-spacing:0.080px;">Other Collection Menu</span>
<div class="b" style="left:658px;top:582px;width:63px;height:33px;background:#f8f8f8;border:1px solid #c6c6c6;border-radius:5px;"></div>
<span class="t" style="left:673.80px;top:591.73px;font-size:12.5px;font-family:'Liberation Serif',serif;font-weight:bold;color:#222;letter-spacing:0.263px;">Name</span>
<div class="b" style="left:721px;top:585px;width:190px;height:27px;background:#fff;border:1px solid #c6c6c6;border-radius:5px;"></div>
<div class="b" style="left:658px;top:636px;width:123px;height:26px;background:#fff;border:1px solid #c6c6c6;border-radius:5px;"></div>
<div class="b" style="left:779px;top:637px;width:1px;height:24px;background:#8a8a8a;"></div>
<div class="b" style="left:765px;top:660px;width:15px;height:1px;background:#8a8a8a;"></div>
<div class="b" style="left:780px;top:637px;width:1px;height:25px;background:#404040;"></div>
<div class="b" style="left:765px;top:661px;width:16px;height:1px;background:#404040;"></div>
<svg class="b" style="left:768.5px;top:647.0px" width="8" height="5" viewBox="0 0 8 5"><path d="M0.3 0.3 H7.7 L4 4.6 Z" fill="#000"/></svg>
<span class="t" style="left:666.80px;top:643.29px;font-size:13.5px;font-family:'Liberation Serif',serif;font-weight:bold;color:#000;letter-spacing:0.200px;">Class</span>
<div class="b" style="left:788px;top:636px;width:122px;height:26px;background:#fff;border:1px solid #c6c6c6;border-radius:5px;"></div>
<div class="b" style="left:908px;top:637px;width:1px;height:24px;background:#8a8a8a;"></div>
<div class="b" style="left:894px;top:660px;width:15px;height:1px;background:#8a8a8a;"></div>
<div class="b" style="left:909px;top:637px;width:1px;height:25px;background:#404040;"></div>
<div class="b" style="left:894px;top:661px;width:16px;height:1px;background:#404040;"></div>
<svg class="b" style="left:897.5px;top:647.0px" width="8" height="5" viewBox="0 0 8 5"><path d="M0.3 0.3 H7.7 L4 4.6 Z" fill="#000"/></svg>
<span class="t" style="left:796.30px;top:643.29px;font-size:13.5px;font-family:'Liberation Serif',serif;font-weight:bold;color:#000;letter-spacing:-0.130px;">Section</span>
<div class="b" style="left:658px;top:684px;width:123px;height:27px;background:#fff;border:1px solid #c6c6c6;border-radius:5px;"></div>
<span class="t" style="left:668.80px;top:691.21px;font-size:13px;font-family:'Liberation Serif',serif;font-weight:bold;color:#7a7a7a;">Session</span>
<div class="b" style="left:787px;top:684px;width:124px;height:27px;background:#fff;border:1px solid #c6c6c6;border-radius:5px;"></div>
<span class="t" style="left:798.20px;top:691.21px;font-size:13px;font-family:'Liberation Serif',serif;font-weight:bold;color:#7a7a7a;">Roll No.</span>
<div class="b" style="left:658px;top:732px;width:103px;height:33px;background:#f8f8f8;border:1px solid #c6c6c6;border-radius:5px;"></div>
<span class="t" style="left:673.00px;top:742.33px;font-size:12.5px;font-family:'Liberation Serif',serif;font-weight:bold;color:#222;letter-spacing:0.320px;">Refreshment</span>
<div class="b" style="left:761px;top:735px;width:150px;height:27px;background:#fff;border:1px solid #c6c6c6;border-radius:5px;"></div>
<span class="t" style="left:774.00px;top:741.55px;font-size:14px;font-family:'Liberation Serif',serif;font-weight:normal;color:#7a7a7a;letter-spacing:0.600px;">Rs.</span>
<div class="b" style="left:658px;top:786px;width:88px;height:33px;background:#f8f8f8;border:1px solid #c6c6c6;border-radius:5px;"></div>
<span class="t" style="left:673.60px;top:797.03px;font-size:12.5px;font-family:'Liberation Serif',serif;font-weight:bold;color:#222;letter-spacing:-0.100px;">Tour Fund</span>
<div class="b" style="left:747px;top:789px;width:164px;height:27px;background:#fff;border:1px solid #c6c6c6;border-radius:5px;"></div>
<span class="t" style="left:756.38px;top:795.70px;font-size:14px;font-family:'Liberation Serif',serif;font-weight:normal;color:#7a7a7a;letter-spacing:0.600px;">Rs.</span>
<div class="b" style="left:917px;top:575px;width:69px;height:33px;background:#f8f8f8;border:1px solid #c6c6c6;border-radius:5px;"></div>
<span class="t" style="left:932.40px;top:585.53px;font-size:12.5px;font-family:'Liberation Serif',serif;font-weight:bold;color:#222;letter-spacing:0.320px;">Copies</span>
<div class="b" style="left:986px;top:578px;width:170px;height:27px;background:#fff;border:1px solid #c6c6c6;border-radius:5px;"></div>
<span class="t" style="left:997.04px;top:584.84px;font-size:14px;font-family:'Liberation Serif',serif;font-weight:normal;color:#7a7a7a;letter-spacing:0.600px;">Rs.</span>
<div class="b" style="left:917px;top:622px;width:80px;height:40px;background:#f8f8f8;border:1px solid #c6c6c6;border-radius:5px;"></div>
<span class="t" style="left:933.20px;top:637.43px;font-size:12.5px;font-family:'Liberation Serif',serif;font-weight:bold;color:#222;letter-spacing:0.535px;">Book</span>
<div class="b" style="left:997px;top:628px;width:159px;height:27px;background:#fff;border:1px solid #c6c6c6;border-radius:5px;"></div>
<span class="t" style="left:1007.00px;top:634.45px;font-size:14px;font-family:'Liberation Serif',serif;font-weight:normal;color:#7a7a7a;letter-spacing:0.600px;">Rs.</span>
<div class="b" style="left:920px;top:676px;width:100px;height:40px;background:#f8f8f8;border:1px solid #c6c6c6;border-radius:5px;"></div>
<span class="t" style="left:935.40px;top:690.73px;font-size:12.5px;font-family:'Liberation Serif',serif;font-weight:bold;color:#222;letter-spacing:0.110px;">Fee card</span>
<div class="b" style="left:1023px;top:682px;width:130px;height:27px;background:#fff;border:1px solid #c6c6c6;border-radius:5px;"></div>
<span class="t" style="left:1033.66px;top:688.17px;font-size:14px;font-family:'Liberation Serif',serif;font-weight:normal;color:#7a7a7a;letter-spacing:0.600px;">Rs.</span>
<div class="b" style="left:917px;top:730px;width:115px;height:40px;background:#f8f8f8;border:1px solid #c6c6c6;border-radius:5px;"></div>
<span class="t" style="left:932.90px;top:744.43px;font-size:12.5px;font-family:'Liberation Serif',serif;font-weight:bold;color:#222;letter-spacing:0.071px;">Student card</span>
<div class="b" style="left:1032px;top:736px;width:124px;height:27px;background:#fff;border:1px solid #c6c6c6;border-radius:5px;"></div>
<span class="t" style="left:1042.66px;top:742.84px;font-size:14px;font-family:'Liberation Serif',serif;font-weight:normal;color:#7a7a7a;letter-spacing:0.600px;">Rs.</span>
<div class="b" style="left:917px;top:784px;width:84px;height:40px;background:#f8f8f8;border:1px solid #c6c6c6;border-radius:5px;"></div>
<span class="t" style="left:933.30px;top:798.43px;font-size:12.5px;font-family:'Liberation Serif',serif;font-weight:bold;color:#222;letter-spacing:0.458px;">Tie/Sash</span>
<div class="b" style="left:1001px;top:790px;width:155px;height:27px;background:#fff;border:1px solid #c6c6c6;border-radius:5px;"></div>
<span class="t" style="left:1011.38px;top:796.55px;font-size:14px;font-family:'Liberation Serif',serif;font-weight:normal;color:#7a7a7a;letter-spacing:0.600px;">Rs.</span>
<div class="b" style="left:1162px;top:567px;width:59px;height:39px;background:#f8f8f8;border:1px solid #c6c6c6;border-radius:5px;"></div>
<span class="t" style="left:1177.10px;top:581.83px;font-size:12.5px;font-family:'Liberation Serif',serif;font-weight:bold;color:#222;letter-spacing:0.004px;">Fund</span>
<div class="b" style="left:1222px;top:573px;width:218px;height:27px;background:#fff;border:1px solid #c6c6c6;border-radius:5px;"></div>
<span class="t" style="left:1231.00px;top:579.31px;font-size:14px;font-family:'Liberation Serif',serif;font-weight:normal;color:#7a7a7a;letter-spacing:0.600px;">Rs.</span>
<div class="b" style="left:1162px;top:613px;width:99px;height:39px;background:#f8f8f8;border:1px solid #c6c6c6;border-radius:5px;"></div>
<span class="t" style="left:1177.60px;top:627.63px;font-size:12.5px;font-family:'Liberation Serif',serif;font-weight:bold;color:#222;letter-spacing:0.539px;">Worksheets</span>
<div class="b" style="left:1262px;top:619px;width:178px;height:27px;background:#fff;border:1px solid #c6c6c6;border-radius:5px;"></div>
<span class="t" style="left:1271.38px;top:625.84px;font-size:14px;font-family:'Liberation Serif',serif;font-weight:normal;color:#7a7a7a;letter-spacing:0.600px;">Rs.</span>
<div class="b" style="left:1162px;top:659px;width:120px;height:40px;background:#f8f8f8;border:1px solid #c6c6c6;border-radius:5px;"></div>
<span class="t" style="left:1177.20px;top:673.43px;font-size:12.5px;font-family:'Liberation Serif',serif;font-weight:bold;color:#222;letter-spacing:0.454px;">Other Charges 1</span>
<div class="b" style="left:1283px;top:665px;width:157px;height:27px;background:#fff;border:1px solid #c6c6c6;border-radius:5px;"></div>
<div class="b" style="left:1162px;top:705px;width:125px;height:40px;background:#f8f8f8;border:1px solid #c6c6c6;border-radius:5px;"></div>
<span class="t" style="left:1177.80px;top:719.53px;font-size:12.5px;font-family:'Liberation Serif',serif;font-weight:bold;color:#222;letter-spacing:0.348px;">Other Charges 2</span>
<div class="b" style="left:1287px;top:711px;width:153px;height:27px;background:#fff;border:1px solid #c6c6c6;border-radius:5px;"></div>
<span class="t" style="left:1297.38px;top:718.07px;font-size:14px;font-family:'Liberation Serif',serif;font-weight:normal;color:#7a7a7a;letter-spacing:0.600px;">Rs.</span>
<div class="b" style="left:1162px;top:751px;width:125px;height:40px;background:#f8f8f8;border:1px solid #c6c6c6;border-radius:5px;"></div>
<span class="t" style="left:1177.80px;top:765.43px;font-size:12.5px;font-family:'Liberation Serif',serif;font-weight:bold;color:#222;letter-spacing:0.348px;">Other Charges 3</span>
<div class="b" style="left:1287px;top:757px;width:153px;height:27px;background:#fff;border:1px solid #c6c6c6;border-radius:5px;"></div>
<span class="t" style="left:1297.38px;top:764.07px;font-size:14px;font-family:'Liberation Serif',serif;font-weight:normal;color:#7a7a7a;letter-spacing:0.600px;">Rs.</span>
<span class="t" style="left:1292.20px;top:672.07px;font-size:14px;font-family:'Liberation Serif',serif;font-weight:normal;color:#7a7a7a;letter-spacing:1.067px;">Rs .</span>
<div class="b" style="left:1162px;top:797px;width:117px;height:40px;background:#f8f8f8;border:1px solid #c6c6c6;border-radius:5px;"></div>
<span class="t" style="left:1178.20px;top:809.02px;font-size:15.5px;font-family:'Liberation Serif',serif;font-weight:bold;color:#222;letter-spacing:0.080px;">Net Charges</span>
<div class="b" style="left:1279px;top:803px;width:161px;height:28px;background:#fcf3cf;border:1px solid #c6c6c6;border-radius:5px;"></div>
<span class="t" style="left:1289.76px;top:810.12px;font-size:16px;font-family:'Liberation Serif',serif;font-weight:bold;color:#7a7a7a;letter-spacing:0.040px;">Rs.</span>
<div class="b" style="left:1446px;top:585px;width:106px;height:39px;background:#3796db;border:2.5px solid #b4b4b4;border-radius:6px;"></div>
<span class="t" style="left:1198.40px;width:600px;text-align:center;top:597.22px;font-size:15.5px;font-family:'Liberation Serif',serif;font-weight:bold;color:#fff;letter-spacing:-0.267px;">View</span>
<div class="b" style="left:1446px;top:649px;width:106px;height:39px;background:#3796db;border:2.5px solid #b4b4b4;border-radius:6px;"></div>
<span class="t" style="left:1198.00px;width:600px;text-align:center;top:660.92px;font-size:15.5px;font-family:'Liberation Serif',serif;font-weight:bold;color:#fff;">Add</span>
<div class="b" style="left:1446px;top:713px;width:106px;height:39px;background:#3796db;border:2.5px solid #b4b4b4;border-radius:6px;"></div>
<span class="t" style="left:1198.40px;width:600px;text-align:center;top:724.42px;font-size:15.5px;font-family:'Liberation Serif',serif;font-weight:bold;color:#fff;letter-spacing:0.200px;">Clear</span>
<div class="b" style="left:1446px;top:777px;width:106px;height:40px;background:#3796db;border:2.5px solid #b4b4b4;border-radius:6px;"></div>
<span class="t" style="left:1198.80px;width:600px;text-align:center;top:788.29px;font-size:19px;font-family:'Liberation Serif',serif;font-weight:bold;color:#fff;letter-spacing:0.200px;">Calculate</span>
</body></html>
